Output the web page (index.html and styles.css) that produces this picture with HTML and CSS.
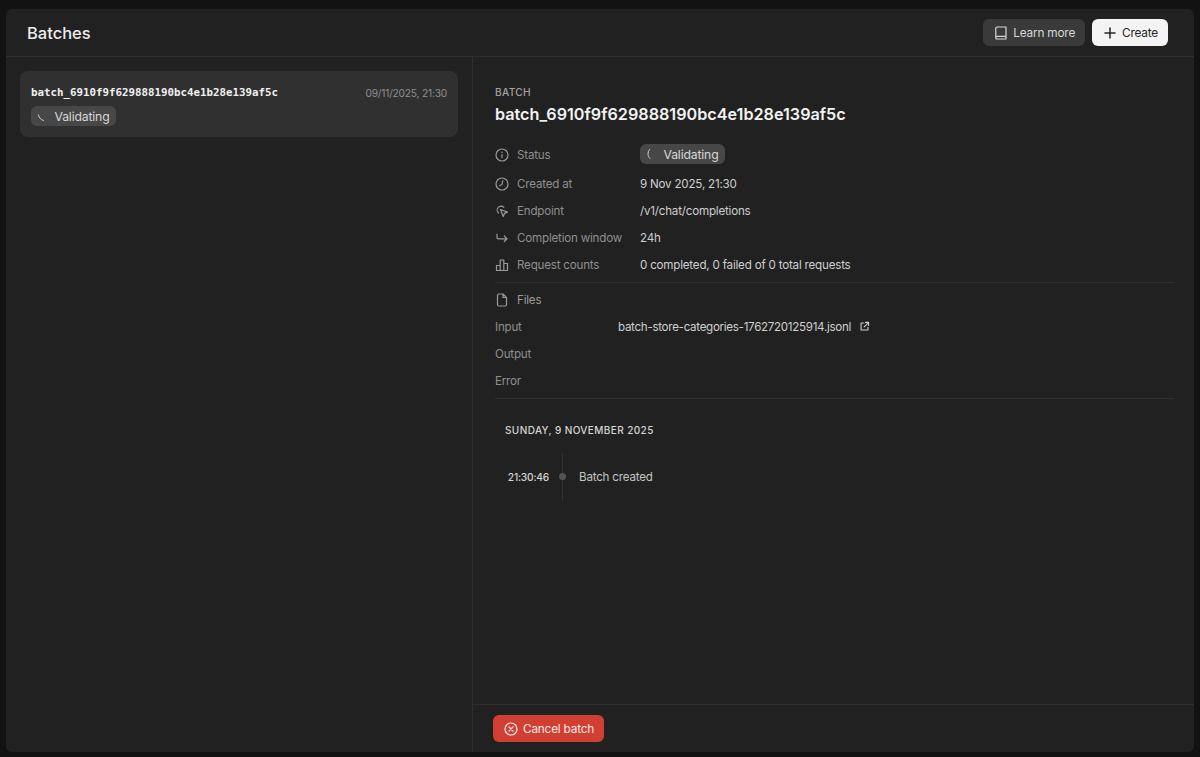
FILE: index.html
```html
<!DOCTYPE html>
<html lang="en">
<head>
    <meta charset="UTF-8">
    <meta name="viewport" content="width=device-width, initial-scale=1.0">
    <title>Batches</title>
    <link rel="stylesheet" href="styles.css">
</head>
<body>
    <div class="panel">
        <header class="top-bar">
            <h1>Batches</h1>
            <div class="top-actions">
                <button class="btn btn-dark">
                    <svg class="icon" viewBox="0 0 16 16"><path d="M2.800 13V3.200c0-.8.500-1.200 1.200-1.200h9v12H4c-.7 0-1.200-.5-1.200-1zM2.800 12.600c0-.7.500-1.200 1.200-1.200h9"/></svg>
                    Learn more
                </button>
                <button class="btn btn-light">
                    <svg class="icon icon-plus" viewBox="0 0 16 16"><path d="M8 3v10M3 8h10"/></svg>
                    Create
                </button>
            </div>
        </header>

        <div class="columns">
            <aside class="batch-list">
                <div class="batch-card">
                    <div class="card-row">
                        <span class="batch-id">batch_6910f9f629888190bc4e1b28e139af5c</span>
                        <span class="batch-date">09/11/2025, 21:30</span>
                    </div>
                    <span class="pill">
                        <svg class="spinner" viewBox="0 0 12 12"><path d="M1.500 5c.3 2.500 2 4.500 5 5.500"/></svg>
                        Validating
                    </span>
                </div>
            </aside>

            <main class="detail">
                <div class="detail-body">
                    <div class="eyebrow">BATCH</div>
                    <h2>batch_6910f9f629888190bc4e1b28e139af5c</h2>

                    <div class="props">
                        <div class="prop prop-status">
                            <span class="prop-label">
                                <svg class="icon" viewBox="0 0 16 16"><circle cx="8" cy="8" r="6"/><path d="M8 7.500v3.200M8 5.200v.3"/></svg>
                                Status
                            </span>
                            <span class="pill">
                                <svg class="spinner" viewBox="0 0 12 12"><path d="M3.500 1.500C1.300 4.500 1.500 8.500 4 10.500"/></svg>
                                Validating
                            </span>
                        </div>
                        <div class="prop">
                            <span class="prop-label">
                                <svg class="icon" viewBox="0 0 16 16"><circle cx="8" cy="8" r="6"/><path d="M8.800 4.500 8 8.500l-2.300 1.300"/></svg>
                                Created at
                            </span>
                            <span class="prop-value">9 Nov 2025, 21:30</span>
                        </div>
                        <div class="prop">
                            <span class="prop-label">
                                <svg class="icon" viewBox="0 0 16 16"><path d="M4.500 10A3.800 3.800 0 1 1 9.800 4.200"/><path d="M6.500 6.500l7 2.600-3 1.300-1.300 3.100z"/></svg>
                                Endpoint
                            </span>
                            <span class="prop-value">/v1/chat/completions</span>
                        </div>
                        <div class="prop">
                            <span class="prop-label">
                                <svg class="icon" viewBox="0 0 16 16"><path d="M3 4v3.500c0 .8.500 1.300 1.300 1.300H13M10.300 6l2.800 2.800-2.800 2.700"/></svg>
                                Completion window
                            </span>
                            <span class="prop-value">24h</span>
                        </div>
                        <div class="prop">
                            <span class="prop-label">
                                <svg class="icon" viewBox="0 0 16 16"><path d="M2.500 13.500V8.500h3.700v5zM6.200 13.500V3h3.600v10.500zM9.800 13.500V6.500h3.700v7z"/></svg>
                                Request counts
                            </span>
                            <span class="prop-value">0 completed, 0 failed of 0 total requests</span>
                        </div>
                    </div>

                    <div class="files">
                        <div class="file-head">
                            <svg class="icon" viewBox="0 0 16 16"><path d="M3.500 3.200c0-.7.500-1.200 1.200-1.200H9l3.500 3.500v7.300c0 .7-.5 1.200-1.200 1.200H4.700c-.7 0-1.200-.5-1.200-1.200zM9 2v3.500h3.500"/></svg>
                            Files
                        </div>
                        <div class="file-row">
                            <span class="file-label">Input</span>
                            <a class="file-link">
                                batch-store-categories-1762720125914.jsonl
                                <svg class="icon icon-small" viewBox="0 0 16 16"><path d="M7 3H3v10h10V9M9.500 2h4.500v4.500M14 2 7.500 8.500"/></svg>
                            </a>
                        </div>
                        <div class="file-row"><span class="file-label">Output</span></div>
                        <div class="file-row"><span class="file-label">Error</span></div>
                    </div>

                    <div class="events">
                        <div class="event-day">SUNDAY, 9 NOVEMBER 2025</div>
                        <div class="event">
                            <span class="event-time">21:30:46</span>
                            <span class="event-line"><span class="event-dot"></span></span>
                            <span class="event-text">Batch created</span>
                        </div>
                    </div>
                </div>

                <footer class="detail-footer">
                    <button class="btn btn-danger">
                        <svg class="icon" viewBox="0 0 16 16"><circle cx="8" cy="8" r="6"/><path d="M6 6l4 4M10 6l-4 4"/></svg>
                        Cancel batch
                    </button>
                </footer>
            </main>
        </div>
    </div>
</body>
</html>
```

FILE: styles.css
```css
* {
    box-sizing: border-box;
    margin: 0;
    padding: 0;
}

html, body {
    height: 100%;
}

body {
    font-family: Inter, "Liberation Sans", sans-serif;
    font-size: 11.6px;
    letter-spacing: -0.2px;
    background: #121212;
    color: #d4d4d4;
    padding: 9px 6px 5px;
    overflow: hidden;
}

svg {
    fill: none;
    stroke: currentColor;
    stroke-width: 1.2;
    stroke-linecap: round;
    stroke-linejoin: round;
    flex-shrink: 0;
}

.icon {
    width: 16px;
    height: 16px;
}

.icon-plus {
    stroke-width: 1.5;
}

.icon-small {
    width: 11px;
    height: 11px;
    margin-left: 8px;
    stroke-width: 1.6;
}

.panel {
    height: 100%;
    display: flex;
    flex-direction: column;
    background: #212121;
    border-radius: 6px;
}

.top-bar {
    height: 48px;
    flex-shrink: 0;
    display: flex;
    align-items: center;
    justify-content: space-between;
    padding: 0 26px 0 21px;
    border-bottom: 1px solid #2e2e2e;
}

.top-bar h1 {
    font-size: 16.5px;
    font-weight: 500;
    letter-spacing: 0;
    color: #ededed;
}

.top-actions {
    display: flex;
    gap: 7px;
}

.btn {
    display: flex;
    align-items: center;
    gap: 4px;
    height: 27px;
    padding: 0 10px;
    border: none;
    border-radius: 6px;
    font-family: inherit;
    font-size: 11.8px;
    letter-spacing: -0.2px;
    cursor: pointer;
}

.btn-dark {
    background: #3a3a3a;
    color: #d8d8d8;
}

.btn-light {
    background: #f4f4f4;
    color: #262626;
}

.btn-danger {
    background: #d13f33;
    color: #fbe9e7;
}

.columns {
    flex: 1;
    min-height: 0;
    display: flex;
}

.batch-list {
    width: 467px;
    flex-shrink: 0;
    padding: 14px 14px 0;
    border-right: 1px solid #2e2e2e;
}

.batch-card {
    height: 66px;
    padding: 14px 11px 0;
    background: #303030;
    border-radius: 8px;
}

.card-row {
    display: flex;
    align-items: center;
    justify-content: space-between;
    height: 15px;
    margin-bottom: 6px;
}

.batch-id {
    font-family: "DejaVu Sans Mono", "Liberation Mono", monospace;
    font-size: 10.800px;
    font-weight: 700;
    letter-spacing: 0;
    color: #f0f0f0;
}

.batch-date {
    font-size: 10.200px;
    letter-spacing: -0.2px;
    color: #8f8f8f;
}

.pill {
    display: inline-flex;
    align-items: center;
    gap: 5.500px;
    height: 20px;
    padding: 0 6.500px 0 6px;
    background: #474747;
    border-radius: 6px;
    font-size: 12.200px;
    letter-spacing: -0.15px;
    color: #d8d8d8;
}

.spinner {
    width: 12px;
    height: 12px;
    color: #d0d0d0;
    stroke-width: 1;
}

.detail {
    flex: 1;
    min-width: 0;
    display: flex;
    flex-direction: column;
}

.detail-body {
    flex: 1;
    padding: 29px 20px 0 22px;
}

.eyebrow {
    font-size: 10.200px;
    font-weight: 500;
    letter-spacing: 0.3px;
    color: #a3a3a3;
    line-height: 12px;
}

.detail-body h2 {
    font-size: 16.200px;
    font-weight: 600;
    letter-spacing: 0;
    color: #f2f2f2;
    line-height: 20px;
    margin-top: 6px;
    margin-bottom: 18px;
}

.props {
    border-bottom: 1px solid #2e2e2e;
    padding-bottom: 4px;
}

.prop {
    display: flex;
    align-items: center;
    height: 27px;
}

.prop-status {
    height: 24px;
    margin-bottom: 4px;
}

.prop-status .prop-label {
    padding-top: 2px;
}

.prop-label {
    width: 145px;
    flex-shrink: 0;
    display: flex;
    align-items: center;
    gap: 7px;
    color: #8f8f8f;
}

.prop-label .icon {
    margin-left: -1px;
    color: #9a9a9a;
}

.prop-value {
    color: #cfcfcf;
}

.files {
    padding-top: 3px;
    padding-bottom: 4px;
    border-bottom: 1px solid #2e2e2e;
}

.file-head {
    display: flex;
    align-items: center;
    gap: 7px;
    height: 27px;
    color: #9a9a9a;
}

.file-head .icon {
    margin-left: -1px;
}

.file-row {
    display: flex;
    align-items: center;
    height: 27px;
}

.file-label {
    width: 123px;
    flex-shrink: 0;
    color: #8f8f8f;
}

.file-link {
    display: flex;
    align-items: center;
    letter-spacing: -0.3px;
    color: #cfcfcf;
}

.events {
    padding: 24px 10px 0;
}

.event-day {
    font-size: 10px;
    font-weight: 500;
    letter-spacing: 0.4px;
    color: #d4d4d4;
    line-height: 14px;
}

.event {
    display: flex;
    align-items: stretch;
    height: 47px;
    margin-top: 16px;
}

.event-time {
    width: 44px;
    align-self: center;
    padding-top: 1px;
    text-align: right;
    font-size: 10.200px;
    font-weight: 500;
    letter-spacing: -0.2px;
    color: #d4d4d4;
}

.event-line {
    display: flex;
    align-items: center;
    justify-content: center;
    width: 1px;
    margin: 0 16px 0 13px;
    background: #333;
}

.event-dot {
    width: 7px;
    height: 7px;
    flex-shrink: 0;
    border-radius: 50%;
    background: #545454;
}

.event-text {
    align-self: center;
    padding-top: 1px;
    color: #c4c4c4;
}

.detail-footer {
    height: 48px;
    flex-shrink: 0;
    display: flex;
    align-items: center;
    padding-left: 20px;
    border-top: 1px solid #2e2e2e;
}
```
